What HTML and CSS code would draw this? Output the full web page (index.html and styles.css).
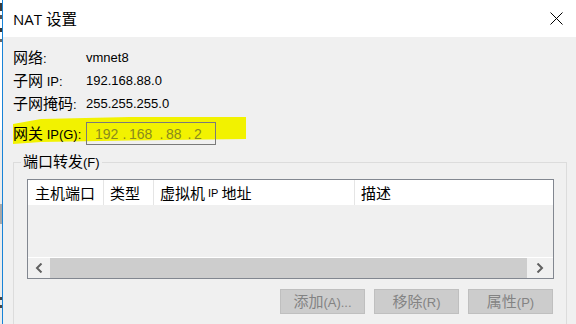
FILE: index.html
```html
<!DOCTYPE html>
<html lang="zh-CN">
<head>
<meta charset="utf-8">
<title>NAT 设置</title>
<link rel="stylesheet" href="styles.css">
</head>
<body>
<div class="desk">
  <div class="behind">
    <svg width="2" height="324" viewBox="0 0 2 324">
      <rect x="0" y="3" width="2" height="8" fill="#3a3a3a"/>
      <rect x="0" y="15" width="2" height="4" fill="#555"/>
      <rect x="0" y="28" width="2" height="4" fill="#333"/>
      <rect x="0" y="39" width="2" height="3" fill="#666"/>
      <rect x="0" y="204" width="2" height="20" fill="#a8a8a8"/>
      <rect x="0" y="297" width="2" height="3" fill="#444"/>
      <rect x="0" y="305" width="2" height="3" fill="#444"/>
    </svg>
  </div>
  <div class="dialog">
    <div class="titlebar">
      <span class="title">NAT <span class="zh">设置</span></span>
      <svg class="close" width="13" height="13" viewBox="0 0 13 13">
        <path d="M0.5 0.5 L12.5 12.5 M12.5 0.5 L0.5 12.5" stroke="#000" stroke-width="1" fill="none"/>
      </svg>
    </div>
    <div class="content">
      <div class="row"><span class="lbl"><span class="zh">网络</span>:</span><span class="val">vmnet8</span></div>
      <div class="row"><span class="lbl"><span class="zh">子网</span> IP:</span><span class="val">192.168.88.0</span></div>
      <div class="row"><span class="lbl"><span class="zh">子网掩码</span>:</span><span class="val">255.255.255.0</span></div>
      <div class="row gw">
        <span class="lbl"><span class="zh">网关</span> IP(G):</span>
        <div class="ipbox">
          <span class="oct o1">192</span><span class="dot">.</span><span class="oct o2">168</span><span class="dot">.</span><span class="oct o3">88</span><span class="dot">.</span><span class="oct o4">2</span>
        </div>
      </div>
      <fieldset class="group">
        <legend><span class="zh">端口转发</span>(F)</legend>
        <div class="list">
          <div class="list-head">
            <div class="col c1"><span class="zh">主机端口</span></div>
            <div class="col c2"><span class="zh">类型</span></div>
            <div class="col c3"><span class="zh">虚拟机</span> <span class="ip">IP</span> <span class="zh">地址</span></div>
            <div class="col c4"><span class="zh">描述</span></div>
          </div>
          <div class="list-body"></div>
          <div class="hscroll">
            <div class="arrow left">
              <svg width="8" height="10" viewBox="0 0 8 10"><polyline points="6.5,0.5 2,5 6.5,9.5" fill="none" stroke="#606060" stroke-width="2"/></svg>
            </div>
            <div class="thumb"></div>
            <div class="arrow right">
              <svg width="8" height="10" viewBox="0 0 8 10"><polyline points="1.5,0.5 6,5 1.5,9.5" fill="none" stroke="#606060" stroke-width="2"/></svg>
            </div>
          </div>
        </div>
        <div class="buttons">
          <button class="btn" disabled><span class="zh">添加</span>(A)...</button>
          <button class="btn" disabled><span class="zh">移除</span>(R)</button>
          <button class="btn" disabled><span class="zh">属性</span>(P)</button>
        </div>
      </fieldset>
    </div>
  </div>
</div>
</body>
</html>
```

FILE: styles.css
```css
html, body {
  margin: 0;
  padding: 0;
}
body {
  width: 576px;
  height: 324px;
  overflow: hidden;
  background: #f0f0f0;
  font-family: "Liberation Sans", "Noto Sans CJK SC", sans-serif;
  font-size: 13px;
  color: #000;
}
.zh {
  font-family: "Noto Sans CJK SC", sans-serif;
  font-size: 15px;
}
.desk {
  display: flex;
  height: 324px;
}
.behind {
  width: 2px;
  flex: none;
  background: linear-gradient(#ffffff 0 130px, #ececec 130px);
}
.behind svg {
  display: block;
}
.dialog {
  flex: 1;
  display: flex;
  flex-direction: column;
  border-left: 1px solid #1883d7;
  min-width: 0;
}
.titlebar {
  height: 37px;
  flex: none;
  background: #fff;
  display: flex;
  align-items: center;
  justify-content: space-between;
  padding-left: 10px;
}
.title {
  font-family: "Open Sans", "Noto Sans CJK SC", sans-serif;
  font-size: 15px;
  line-height: 20px;
}
.title .zh {
  font-size: 15.5px;
}
.close {
  display: block;
  margin-right: 13px;
}
.content {
  flex: 1;
  min-height: 0;
  background: #f0f0f0;
  padding: 9px 0 0 10px;
  isolation: isolate;
}
.row {
  display: flex;
  align-items: center;
  height: 23px;
  line-height: 20px;
}
.lbl {
  width: 73px;
  flex: none;
  white-space: nowrap;
}
.val {
  white-space: nowrap;
}
.gw {
  margin-top: 7px;
  position: relative;
}
.gw::before {
  content: "";
  position: absolute;
  left: 0;
  top: -5px;
  width: 233px;
  height: 28px;
  background: #f2f200;
  clip-path: polygon(0 25%, 12% 7%, 50% 0, 100% 0, 100% 79%, 50% 84%, 12% 89%, 0 96%);
  z-index: -1;
}
.ipbox {
  box-sizing: border-box;
  width: 130px;
  height: 23px;
  border: 1px solid #7a7a7a;
  display: flex;
  align-items: center;
  padding-left: 8px;
  font-size: 14px;
  color: #8a8a1e;
  white-space: pre;
}
.oct, .dot {
  display: inline-block;
}
.o1 { width: 25px; }
.o2 { width: 28px; }
.o3 { width: 19px; }
.dot {
  width: 9px;
  text-align: center;
}
.group {
  margin: 7px 9px 0 0;
  padding: 0 12px 10px 13px;
  border: 1px solid #dcdcdc;
  border-bottom: none;
  min-width: 0;
}
.group legend {
  margin-left: -6px;
  padding: 0 2px;
  line-height: 18px;
}
.list {
  box-sizing: border-box;
  margin-top: 7px;
  height: 100px;
  border: 1px solid #828790;
  display: flex;
  flex-direction: column;
}
.list-head {
  height: 25px;
  flex: none;
  background: #fff;
  display: grid;
  grid-template-columns: 76px 50px 201px 1fr;
}
.col {
  box-sizing: border-box;
  border-right: 1px solid #e5e5e5;
  padding-left: 6px;
  display: flex;
  align-items: center;
  white-space: nowrap;
  line-height: 20px;
}
.col.c1 {
  padding-left: 7px;
}
.col.c4 {
  border-right: none;
}
.ip {
  font-size: 11px;
  margin: 0 3px;
}
.list-body {
  flex: 1;
  background: #f0f0f0;
}
.hscroll {
  flex: none;
  height: 21px;
  border-top: 1px solid #fff;
  box-sizing: border-box;
  display: flex;
  background: #f0f0f0;
}
.arrow {
  display: flex;
  align-items: center;
  justify-content: center;
  flex: none;
}
.arrow svg {
  display: block;
}
.arrow.left {
  width: 22px;
}
.arrow.right {
  width: 26px;
}
.thumb {
  flex: 1;
  background: #cdcdcd;
}
.buttons {
  display: flex;
  justify-content: flex-end;
  gap: 9px;
  margin-top: 10px;
  padding-right: 1px;
}
.btn {
  box-sizing: border-box;
  width: 85px;
  height: 25px;
  padding: 0;
  background: #cccccc;
  border: 1px solid #bfbfbf;
  color: #838383;
  font-family: "Liberation Sans", "Noto Sans CJK SC", sans-serif;
  font-size: 13px;
  line-height: 20px;
}
```
